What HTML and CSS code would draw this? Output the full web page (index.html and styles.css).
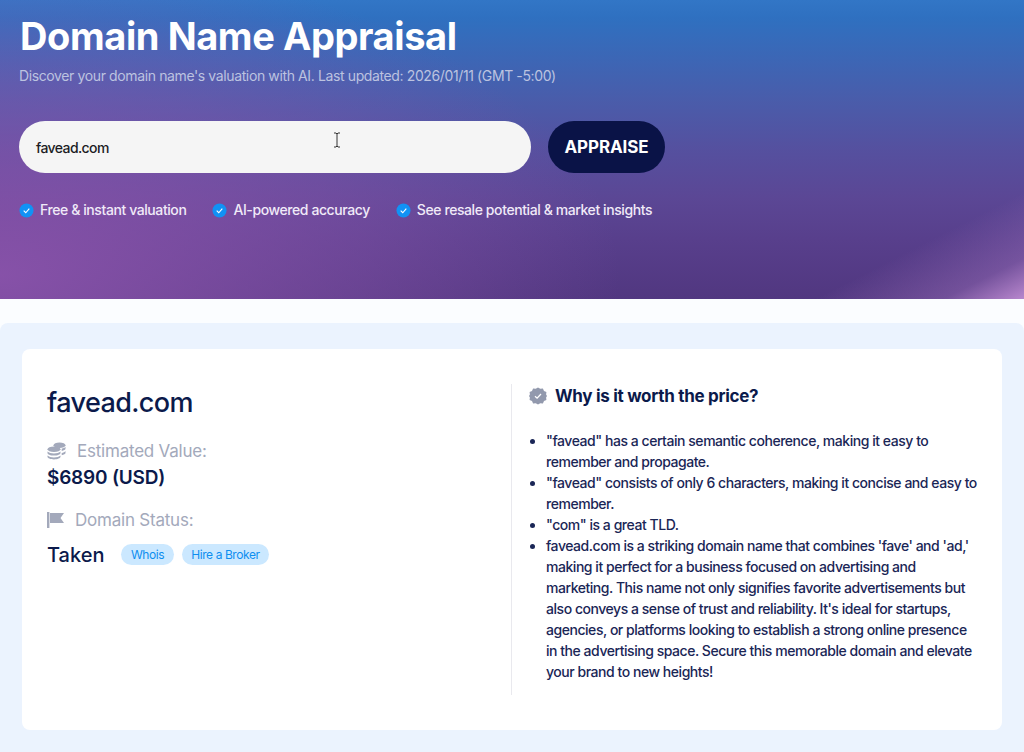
FILE: index.html
```html
<!DOCTYPE html>
<html lang="en">
<head>
<meta charset="utf-8">
<title>Domain Name Appraisal</title>
<link rel="stylesheet" href="styles.css">
</head>
<body>
<header class="hero">
  <h1 class="hero-title">Domain Name Appraisal</h1>
  <p class="hero-sub">Discover your domain name's valuation with AI. Last updated: 2026/01/11 (GMT -5:00)</p>
  <div class="search">
    <div class="search-input">favead.com
      <svg class="cursor" width="8" height="16" viewBox="0 0 8 16"><path d="M1 1h2l1 1 1-1h2M4 2v12M1 15h2l1-1 1 1h2" fill="none" stroke="#333" stroke-width="1"/></svg>
    </div>
    <button class="search-btn">APPRAISE</button>
  </div>
  <ul class="perks">
    <li class="perk"><svg class="tick" viewBox="0 0 16 16"><circle cx="8" cy="8" r="7.5" fill="#1192f5"/><path d="M5 8.2l2.2 2.2L11 6" fill="none" stroke="#fff" stroke-width="1.2"/></svg>Free &amp; instant valuation</li>
    <li class="perk"><svg class="tick" viewBox="0 0 16 16"><circle cx="8" cy="8" r="7.5" fill="#1192f5"/><path d="M5 8.2l2.2 2.2L11 6" fill="none" stroke="#fff" stroke-width="1.2"/></svg>AI-powered accuracy</li>
    <li class="perk"><svg class="tick" viewBox="0 0 16 16"><circle cx="8" cy="8" r="7.5" fill="#1192f5"/><path d="M5 8.2l2.2 2.2L11 6" fill="none" stroke="#fff" stroke-width="1.2"/></svg>See resale potential &amp; market insights</li>
  </ul>
</header>
<main class="panel">
  <section class="card">
    <div class="left">
      <h2 class="domain">favead.com</h2>
      <div class="label label-value">
        <svg class="coins" viewBox="0 0 20 18"><g fill="#a3a9bb"><ellipse cx="12.500" cy="3.200" rx="6" ry="2.800"/><path d="M18.500 4.800v2c0 .9-1.600 1.800-3.800 2.200V6.700c1.700-.3 3-.9 3.800-1.900zM18.500 9v2c0 .9-1.600 1.800-3.800 2.200V11c1.700-.3 3-1 3.800-2z"/><ellipse cx="7" cy="7.300" rx="6.500" ry="2.800"/><path d="M.5 9.500v1.400c0 1.400 2.900 2.600 6.500 2.600s6.500-1.200 6.500-2.600V9.500c-1.200 1.200-3.700 2-6.500 2s-5.300-.8-6.500-2z"/><path d="M.5 13.400v1.400C.5 16.200 3.400 17.400 7 17.400s6.500-1.200 6.500-2.600v-1.400c-1.200 1.200-3.700 2-6.500 2s-5.300-.8-6.500-2z"/></g></svg>
        Estimated Value:
      </div>
      <div class="price">$6890 (USD)</div>
      <div class="label label-status">
        <svg class="flag" viewBox="0 0 17 16"><path d="M0 0h2.400v16H0zM3 1h14l-3.500 5 3.500 5H3z" fill="#a3a9bb"/></svg>
        Domain Status:
      </div>
      <div class="status">
        <span class="taken">Taken</span>
        <span class="chip">Whois</span>
        <span class="chip">Hire a Broker</span>
      </div>
    </div>
    <div class="right">
      <h3 class="why">
        <svg class="badge" viewBox="0 0 18 18"><path d="M9 .5l2.300 1.300 2.600-.3 1.100 2.400 2.400 1.100-.3 2.600L18 9l-.9 1.400.3 2.600-2.400 1.100-1.100 2.400-2.600-.3L9 17.500l-2.300-1.300-2.600.3L3 14.100.6 13l.3-2.600L0 9l.9-1.400L.6 5 3 3.900l1.100-2.400 2.600.3z" fill="#9299ad"/><path d="M6 9.200l2.100 2L12 7" fill="none" stroke="#fff" stroke-width="1.300"/></svg>
        Why is it worth the price?
      </h3>
      <ul class="reasons">
        <li>"favead" has a certain semantic coherence, making it easy to remember and propagate.</li>
        <li>"favead" consists of only 6 characters, making it concise and easy to remember.</li>
        <li>"com" is a great TLD.</li>
        <li>favead.com is a striking domain name that combines 'fave' and 'ad,' making it perfect for a business focused on advertising and marketing. This name not only signifies favorite advertisements but also conveys a sense of trust and reliability. It's ideal for startups, agencies, or platforms looking to establish a strong online presence in the advertising space. Secure this memorable domain and elevate your brand to new heights!</li>
      </ul>
    </div>
  </section>
</main>
</body>
</html>
```
FILE: styles.css
```css
* { box-sizing: border-box; }
html, body { margin: 0; padding: 0; }
body {
  height: 752px;
  overflow: hidden;
  background: #fbfdff;
  font-family: Inter, "Liberation Sans", sans-serif;
  color: #0b1a4b;
}
.hero {
  height: 299px;
  padding: 13px 19px 0;
  background:
    linear-gradient(153deg, rgba(190,140,210,0) 87%, rgba(176,126,200,.35) 95%, rgba(190,140,210,.95) 100%),
    radial-gradient(ellipse 620px 320px at 0 92%, rgba(140,84,172,.9), rgba(140,84,172,.4) 60%, rgba(140,84,172,0) 100%),
    linear-gradient(180deg, #3276c6 0%, #2f70c0 6%, #4a5caa 34%, #55509f 50%, #5b4795 66%, #583f8c 80%, #513780 100%);
}
.hero-title {
  margin: 0 0 0 1px;
  font-size: 38px;
  line-height: 46px;
  font-weight: 700;
  letter-spacing: -.4px;
  color: #fff;
}
.hero-sub {
  margin: 7px 0 0;
  font-size: 14px;
  line-height: 20px;
  letter-spacing: -.38px;
  color: #bcc3e0;
}
.search {
  display: flex;
  gap: 17px;
  margin-top: 35px;
}
.search-input {
  position: relative;
  width: 512px;
  height: 52px;
  padding: 1px 0 0 17px;
  border-radius: 26px;
  background: #f5f5f5;
  color: #1c1c24;
  font-size: 14px;
  font-weight: 500;
  line-height: 52px;
  letter-spacing: -.6px;
}
.cursor { position: absolute; left: 314px; top: 11px; }
.search-btn {
  width: 117px;
  height: 52px;
  border: 0;
  border-radius: 26px;
  background: #0a1347;
  color: #fff;
  font-family: inherit;
  font-size: 17px;
  font-weight: 700;
  letter-spacing: -.1px;
}
.perks {
  display: flex;
  gap: 26px;
  margin: 27px 0 0;
  padding: 0;
  list-style: none;
}
.perk {
  display: flex;
  align-items: center;
  gap: 6px;
  font-size: 14px;
  font-weight: 500;
  line-height: 20px;
  letter-spacing: -.41px;
  color: #f0eaf8;
}
.tick { width: 15px; height: 15px; }
.panel {
  height: 429px;
  margin-top: 24px;
  padding: 26px 22px 0;
  background: #ebf3fe;
  border-radius: 8px 8px 0 0;
}
.card {
  display: flex;
  height: 381px;
  padding: 36px 0 0 25px;
  background: #fff;
  border-radius: 8px;
}
.left { width: 464px; flex: none; }
.domain {
  margin: 0;
  font-size: 27px;
  line-height: 36px;
  font-weight: 500;
  letter-spacing: -.6px;
}
.label {
  display: flex;
  align-items: center;
  font-size: 17px;
  line-height: 24px;
  letter-spacing: -.22px;
  color: #a3a9bb;
}
.label-value { margin-top: 18px; gap: 10px; }
.label-status { margin-top: 16px; gap: 11px; }
.coins { width: 20px; height: 18px; }
.flag { width: 17px; height: 16px; }
.price {
  margin-top: 1px;
  font-size: 19px;
  line-height: 28px;
  font-weight: 600;
  letter-spacing: -.2px;
}
.status {
  display: flex;
  align-items: center;
  margin-top: 9px;
}
.taken { margin: 1px 17px 0 0; font-size: 20px; line-height: 26px; font-weight: 500; }
.chip {
  height: 21px;
  margin-right: 8px;
  padding: 0 9.5px;
  border-radius: 11px;
  background: #cbe8ff;
  color: #0e8ef0;
  font-size: 12px;
  line-height: 21px;
  letter-spacing: -.42px;
}
.right {
  width: 467px;
  height: 311px;
  margin-top: -1px;
  padding-left: 17px;
  border-left: 1px solid #e9e9ee;
}
.why {
  display: flex;
  align-items: center;
  gap: 8px;
  margin: 0;
  font-size: 17px;
  line-height: 24px;
  font-weight: 700;
  letter-spacing: -.3px;
}
.badge { width: 18px; height: 18px; }
.reasons {
  margin: 22px 0 0;
  padding-left: 17px;
  font-size: 14px;
  font-weight: 500;
  line-height: 21px;
  letter-spacing: -.46px;
  color: #1a2656;
}
```
